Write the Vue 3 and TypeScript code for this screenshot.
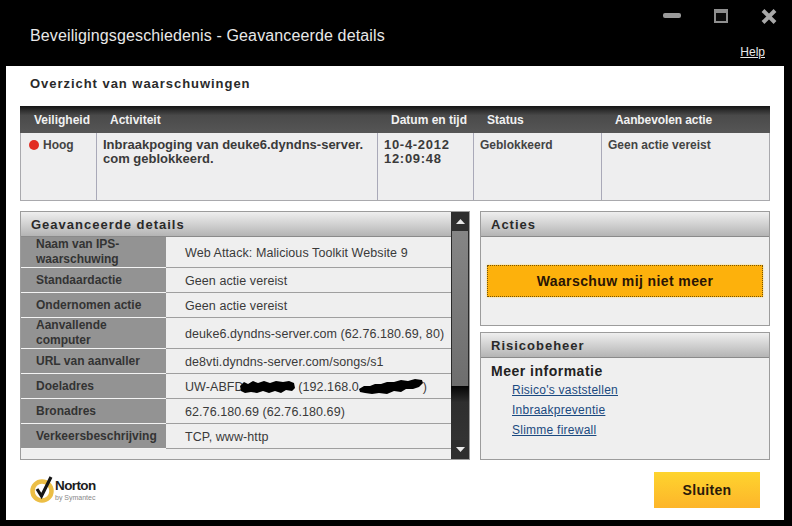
<script setup lang="ts">
// Overzichtsvenster met waarschuwingsdetails
const detailRows = [
  { label: 'Naam van IPS-waarschuwing', value: 'Web Attack: Malicious Toolkit Website 9', tall: true },
  { label: 'Standaardactie', value: 'Geen actie vereist', tall: false },
  { label: 'Ondernomen actie', value: 'Geen actie vereist', tall: false },
  { label: 'Aanvallende computer', value: 'deuke6.dyndns-server.com (62.76.180.69, 80)', tall: true },
  { label: 'URL van aanvaller', value: 'de8vti.dyndns-server.com/songs/s1', tall: false },
  { label: 'Doeladres', value: '', tall: false },
  { label: 'Bronadres', value: '62.76.180.69 (62.76.180.69)', tall: false },
  { label: 'Verkeersbeschrijving', value: 'TCP, www-http', tall: false },
]

const links = ["Risico's vaststellen", 'Inbraakpreventie', 'Slimme firewall']
</script>

<template>
  <div class="window">
    <header class="titlebar">
      <h1 class="title">Beveiligingsgeschiedenis - Geavanceerde details</h1>
      <div class="controls">
        <div class="winbtns">
          <svg width="18" height="6" viewBox="0 0 18 6"><rect x="0" y="0" width="18" height="5" rx="2" fill="#9a9a9a" /></svg>
          <svg width="14" height="14" viewBox="0 0 14 14"><rect x="0" y="0" width="14" height="14" fill="#8f8f8f" /><rect x="2" y="4" width="10" height="8" fill="#0c0c0c" /></svg>
          <svg width="16" height="15" viewBox="0 0 16 15"><path d="M2 1.5 L8 7.5 L14 1.5 M2 13.5 L8 7.5 L14 13.5" stroke="#a8a8a8" stroke-width="4" fill="none" /></svg>
        </div>
        <a class="help">Help</a>
      </div>
    </header>

    <main class="content">
      <h2 class="overview">Overzicht van waarschuwingen</h2>

      <section class="alerts">
        <div class="alerts-head">
          <span>Veiligheid</span>
          <span>Activiteit</span>
          <span>Datum en tijd</span>
          <span>Status</span>
          <span>Aanbevolen actie</span>
        </div>
        <div class="alerts-row">
          <div class="cell sev"><i class="dot"></i>Hoog</div>
          <div class="cell big">Inbraakpoging van deuke6.dyndns-server.<br />com geblokkeerd.</div>
          <div class="cell big date">10-4-2012<br />12:09:48</div>
          <div class="cell">Geblokkeerd</div>
          <div class="cell">Geen actie vereist</div>
        </div>
      </section>

      <div class="columns">
        <section class="panel details">
          <div class="details-main">
            <div class="panel-head">Geavanceerde details</div>
            <div v-for="row in detailRows" :key="row.label" class="row" :class="{ tall: row.tall }">
              <div class="row-label">{{ row.label }}</div>
              <div class="row-value">
                <span v-if="row.value">{{ row.value }}</span>
                <span v-else>UW-ABFD<svg class="blob first" width="56" height="14" viewBox="0 0 56 14"><path d="M1 6 L5 2 L9 4 L14 1 L19 3 L25 1 L31 3 L37 1 L44 2 L50 1 L55 3 L56 8 L53 11 L47 10 L42 13 L36 11 L30 13 L24 11 L18 13 L12 12 L6 13 L2 11 Z" fill="#000" /></svg> (192.168.0<svg class="blob" width="64" height="16" viewBox="0 0 64 16"><path d="M0 10 L5 7 L11 7 L16 5 L22 5 L28 3 L35 3 L42 1 L49 2 L56 0 L63 1 L64 4 L60 8 L54 10 L47 10 L42 13 L35 12 L28 15 L20 14 L13 15 L6 14 L1 13 Z" fill="#000" /></svg>)</span>
              </div>
            </div>
          </div>
          <div class="scrollbar">
            <div class="arrow"><svg width="9" height="5" viewBox="0 0 9 5"><path d="M4.500 0 L9 5 L0 5 Z" fill="#e8e8e8" /></svg></div>
            <div class="thumb"></div>
            <div class="track"></div>
            <div class="arrow"><svg width="9" height="5" viewBox="0 0 9 5"><path d="M0 0 L9 0 L4.500 5 Z" fill="#e8e8e8" /></svg></div>
          </div>
        </section>

        <div class="side">
          <section class="panel acties">
            <div class="panel-head">Acties</div>
            <div class="acties-body">
              <button class="warn">Waarschuw mij niet meer</button>
            </div>
          </section>
          <section class="panel risico">
            <div class="panel-head">Risicobeheer</div>
            <div class="risico-body">
              <h3>Meer informatie</h3>
              <a v-for="link in links" :key="link">{{ link }}</a>
            </div>
          </section>
        </div>
      </div>

      <footer class="foot">
        <div class="logo">
          <svg width="26" height="28" viewBox="0 0 26 28">
            <circle cx="12" cy="16" r="9.500" fill="none" stroke="#ecbe45" stroke-width="4.500" />
            <path d="M7 14 L11.500 21 L21 2" fill="none" stroke="#151515" stroke-width="3.200" />
          </svg>
          <div class="logo-text">
            <strong>Norton</strong>
            <small>by Symantec</small>
          </div>
        </div>
        <button class="close">Sluiten</button>
      </footer>
    </main>
  </div>
</template>

<style scoped>
.window {
  width: 792px;
  height: 526px;
  background: #000;
  display: flex;
  flex-direction: column;
  font-family: "Liberation Sans", Arial, sans-serif;
  color: #222;
  overflow: hidden;
}

.titlebar {
  height: 66px;
  flex: none;
  display: flex;
  justify-content: space-between;
  padding: 0 15px 0 30px;
}

.title {
  margin: 26px 0 0;
  font-size: 16px;
  font-weight: normal;
  line-height: 19px;
  letter-spacing: 0.13px;
  color: #e8e8e8;
}

.controls {
  display: flex;
  flex-direction: column;
  align-items: flex-end;
}

.winbtns {
  display: flex;
  align-items: center;
  gap: 33px;
  height: 16px;
  margin-top: 8px;
}

.help {
  margin: 21px 12px 0 0;
  font-size: 12px;
  line-height: 14px;
  color: #e8e8e8;
  text-decoration: underline;
}

.content {
  flex: none;
  height: 454px;
  margin: 0 8px 0 6px;
  background: #fff;
  padding: 0 14px;
  display: flex;
  flex-direction: column;
}

.overview {
  margin: 10px 0 0 10px;
  font-size: 13px;
  line-height: 16px;
  letter-spacing: 0.96px;
  color: #2a2a2a;
}

.alerts {
  margin-top: 14px;
  width: 750px;
  height: 95px;
  flex: none;
  display: flex;
  flex-direction: column;
}

.alerts-head {
  height: 26px;
  flex: none;
  display: grid;
  grid-template-columns: 90px 281px 96px 128px 1fr;
  align-items: center;
  background: linear-gradient(#151515, #4a4a4a 35%, #565656);
  color: #f1f1f1;
  font-size: 12px;
  font-weight: bold;
  padding-top: 1px;
}

.alerts-head span:first-child { padding-left: 14px; }
.alerts-head span:nth-child(5) { letter-spacing: -0.1px; }

.alerts-row {
  flex: 1;
  display: grid;
  grid-template-columns: 75px 281px 96px 128px 1fr;
  background: #eeeeef;
  border: 1px solid #a9a9ad;
  border-top: none;
}

.cell {
  padding: 5px 5px 0 6px;
  font-size: 12px;
  font-weight: bold;
  line-height: 14px;
  color: #444;
  border-left: 1px solid #a9a9b8;
}

.cell:first-child { border-left: none; }
.cell.big { font-size: 13px; color: #3a3a3a; }
.cell.date { letter-spacing: 0.7px; }

.sev {
  display: flex;
  align-items: flex-start;
  padding-left: 8px;
}

.dot {
  width: 10px;
  height: 10px;
  margin: 2px 4px 0 0;
  border-radius: 50%;
  background: #e22c22;
}

.columns {
  margin-top: 10px;
  display: flex;
  gap: 10px;
  height: 249px;
  flex: none;
}

.panel {
  border: 1px solid #9c9c9c;
  background: #efefef;
  box-sizing: border-box;
}

.panel-head {
  height: 24px;
  padding-left: 10px;
  border-bottom: 1px solid #8a8a8a;
  background: linear-gradient(#efefef, #b4b4b4);
  font-size: 13px;
  font-weight: bold;
  line-height: 25px;
  letter-spacing: 1px;
  color: #2a2a2a;
}

.details {
  width: 450px;
  display: flex;
}

.details-main {
  width: 430px;
}

.row {
  display: flex;
  height: 25px;
  box-sizing: border-box;
}

.row.tall {
  height: 31px;
}

.row-label {
  width: 145px;
  flex: none;
  box-sizing: border-box;
  padding: 0 7px 0 15px;
  background: #939393;
  border-bottom: 1px solid #f4f4f4;
  font-size: 12px;
  font-weight: bold;
  line-height: 15px;
  color: #333;
  display: flex;
  align-items: center;
}

.row-value {
  flex: 1;
  padding: 1px 0 0 19px;
  border-bottom: 1px solid #9f9f9f;
  font-size: 12.500px;
  line-height: 24px;
  letter-spacing: 0.08px;
  color: #3a3a3a;
  white-space: nowrap;
  display: flex;
  align-items: center;
}

.blob {
  vertical-align: middle;
}

.blob.first {
  margin-left: -5px;
}

.scrollbar {
  width: 18px;
  flex: none;
  display: flex;
  flex-direction: column;
  background: #2a2a2a;
}

.arrow {
  height: 19px;
  flex: none;
  display: flex;
  align-items: center;
  justify-content: center;
  background: #2e2e2e;
}

.thumb {
  height: 155px;
  flex: none;
  margin: 0 1px;
  background: linear-gradient(#858585, #6e6e6e);
}

.track {
  flex: 1;
  background: linear-gradient(#050505, #2e2e2e 30%, #333);
}

.side {
  width: 290px;
  display: flex;
  flex-direction: column;
  gap: 6px;
}

.acties {
  height: 115px;
  flex: none;
}

.acties-body {
  padding: 28px 6px 0;
}

.warn {
  display: block;
  width: 100%;
  height: 32px;
  padding: 0;
  border: 1px dotted #7a5500;
  background: #fdb10c;
  box-shadow: 0 0 2px #f8d880;
  font-family: inherit;
  font-size: 14px;
  font-weight: bold;
  letter-spacing: 0.4px;
  color: #2a1505;
}

.risico {
  flex: 1;
}

.risico-body {
  padding: 5px 0 0 10px;
  display: flex;
  flex-direction: column;
  align-items: flex-start;
}

.risico-body h3 {
  margin: 0 0 1px;
  font-size: 14px;
  line-height: 16px;
  letter-spacing: 0.5px;
  color: #222;
}

.risico-body a {
  margin-left: 21px;
  font-size: 12px;
  line-height: 20px;
  letter-spacing: 0.25px;
  color: #1b4a80;
  text-decoration: underline;
}

.foot {
  flex: 1;
  display: flex;
  justify-content: space-between;
  padding: 12px 10px 0 10px;
}

.logo {
  display: flex;
  align-items: flex-start;
  height: 30px;
  margin-top: 3px;
}

.logo-text {
  display: flex;
  flex-direction: column;
  margin: 4px 0 0 -1px;
}

.logo-text strong {
  font-size: 13.500px;
  line-height: 14px;
  letter-spacing: -0.6px;
  color: #1c1c1c;
}

.logo-text small {
  font-size: 7px;
  line-height: 9px;
  color: #888;
}

.close {
  width: 106px;
  height: 36px;
  padding: 0;
  border: none;
  background: linear-gradient(#fed42e, #fdb52a);
  font-family: inherit;
  font-size: 14px;
  font-weight: bold;
  letter-spacing: 0.3px;
  color: #2a1a0a;
}
</style>
